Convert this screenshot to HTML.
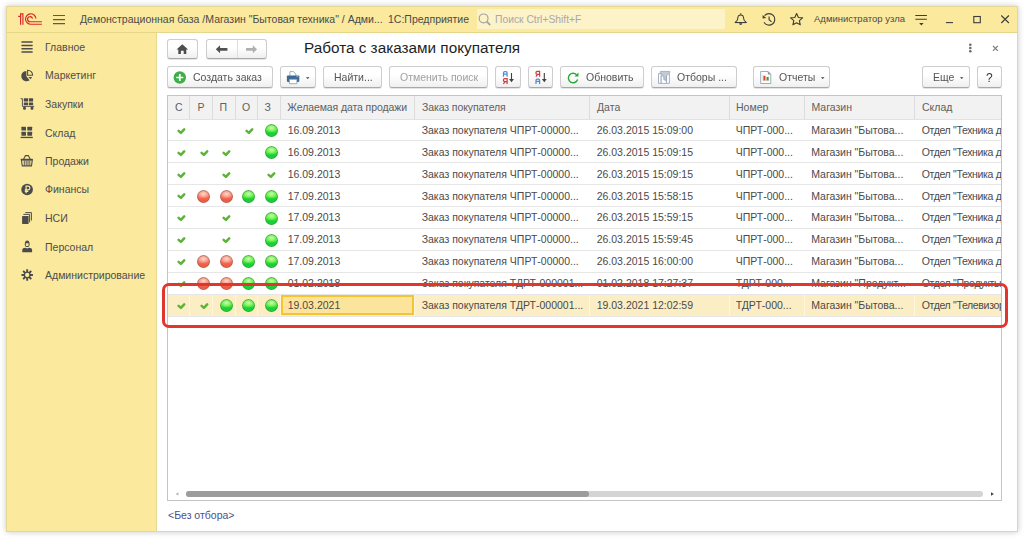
<!DOCTYPE html>
<html><head><meta charset="utf-8"><style>
*{box-sizing:border-box;margin:0;padding:0}
html,body{width:1024px;height:539px;overflow:hidden;background:#fff}
body{font-family:"Liberation Sans",sans-serif;font-size:10.5px;color:#4d4d4d;position:relative}
.abs{position:absolute}
.t{position:absolute;white-space:nowrap;line-height:13px}
svg{position:absolute;overflow:visible}
#win{position:absolute;left:6px;top:6px;width:1012px;height:526px;background:#fff;box-shadow:0 0 6px rgba(0,0,0,.22);border:1px solid #e4d797}
#hdr{position:absolute;left:7px;top:7px;width:1010px;height:26px;background:#fbe99d;border-bottom:1px solid #e6d68a}
#side{position:absolute;left:7px;top:33px;width:150px;height:498px;background:#fbe99d;border-right:1px solid #e8d98f}
.btn{position:absolute;height:22px;border:1px solid #cdcdcd;border-bottom-color:#a8a8a8;border-radius:3px;background:linear-gradient(#fff,#fff 40%,#efefef);box-shadow:0 1px 0 rgba(0,0,0,.10)}
.bt{position:absolute;white-space:nowrap;line-height:13px;color:#555;will-change:transform}
#tbl{position:absolute;left:167px;top:95px;width:835px;height:406px;border:1px solid #c4c4c4;background:#fff;overflow:hidden}
.hd{position:absolute;left:0;top:0;width:833px;height:24px;background:#f2f2f2;border-bottom:1px solid #e2e2e2}
.vd{position:absolute;top:0;width:1px;height:23px;background:#dcdcdc}
.hl{position:absolute;left:0;width:833px;height:1px;background:#e6e6e6}
.c{position:absolute;white-space:nowrap;overflow:hidden;line-height:13px;color:#4a4a4a}
.hc{position:absolute;white-space:nowrap;line-height:13px;color:#606060}
.dot{position:absolute;width:13px;height:13px;border-radius:50%}
.g{background:radial-gradient(ellipse 50% 36% at 50% 30%,#cffcb8 0,#80f564 55%,rgba(80,240,50,0) 100%),linear-gradient(#62f048,#44eb2e 45%,#14cd38 76%,#24d83a);box-shadow:inset 0 0 0 1px rgba(80,95,80,.5)}
.r{background:radial-gradient(ellipse 50% 36% at 50% 30%,#ffd9cf 0,#fba593 55%,rgba(245,110,85,0) 100%),linear-gradient(#f89380,#f3735c 50%,#ee5b42 80%,#f06a50);box-shadow:inset 0 0 0 1px rgba(110,90,90,.5)}
</style></head><body>
<div id="win"></div><div id="hdr"></div><div id="side"></div>
<div class="t" style="left:80px;top:13px;color:#4a4a4a">Демонстрационная база /Магазин "Бытовая техника" / Адми...</div>
<div class="t" style="left:388px;top:13px;color:#4a4a4a">1С:Предприятие</div>
<div class="abs" style="left:477px;top:9px;width:248px;height:20px;background:#fdf3c9"></div>
<div class="t" style="left:495px;top:13px;color:#a8a8a8;font-size:10.3px">Поиск Ctrl+Shift+F</div>
<div class="t" style="left:814px;top:12px;color:#4a4a4a;font-size:9.5px">Администратор узла</div>
<div class="t" style="left:45px;top:41px;">Главное</div>
<div class="t" style="left:45px;top:69px;">Маркетинг</div>
<div class="t" style="left:45px;top:98px;">Закупки</div>
<div class="t" style="left:45px;top:127px;">Склад</div>
<div class="t" style="left:45px;top:155px;">Продажи</div>
<div class="t" style="left:45px;top:183px;">Финансы</div>
<div class="t" style="left:45px;top:212px;">НСИ</div>
<div class="t" style="left:45px;top:241px;">Персонал</div>
<div class="t" style="left:45px;top:269px;">Администрирование</div>
<div class="t" style="left:304px;top:39px;font-size:15.3px;line-height:17px;color:#1e1e1e">Работа с заказами покупателя</div>
<div class="btn" style="left:167px;top:39px;width:31px;height:20px"></div>
<div class="btn" style="left:206px;top:39px;width:61px;height:20px"></div>
<div class="abs" style="left:237px;top:40px;width:1px;height:18px;background:#dedede"></div>
<div class="btn" style="left:167px;top:66px;width:106px;height:22px"></div>
<div class="bt" style="left:193px;top:71px;">Создать заказ</div>
<div class="btn" style="left:280px;top:66px;width:36px;height:22px"></div>
<div class="btn" style="left:323px;top:66px;width:59px;height:22px"></div>
<div class="bt" style="left:334px;top:71px;">Найти...</div>
<div class="btn" style="left:389px;top:66px;width:99px;height:22px"></div>
<div class="bt" style="left:400px;top:71px;color:#a0a0a0">Отменить поиск</div>
<div class="btn" style="left:495px;top:66px;width:26px;height:22px"></div>
<div class="btn" style="left:528px;top:66px;width:25px;height:22px"></div>
<div class="btn" style="left:560px;top:66px;width:84px;height:22px"></div>
<div class="bt" style="left:586px;top:71px;">Обновить</div>
<div class="btn" style="left:651px;top:66px;width:86px;height:22px"></div>
<div class="bt" style="left:677px;top:71px;">Отборы ...</div>
<div class="btn" style="left:753px;top:66px;width:77px;height:22px"></div>
<div class="bt" style="left:779px;top:71px;">Отчеты</div>
<div class="btn" style="left:922px;top:66px;width:48px;height:22px"></div>
<div class="bt" style="left:933px;top:71px;">Еще</div>
<div class="btn" style="left:977px;top:66px;width:25px;height:22px"></div>
<div class="bt" style="left:986px;top:72px;font-size:12px;color:#333">?</div>
<div id="tbl">
<div class="hd"></div>
<div class="vd" style="left:21px"></div>
<div class="vd" style="left:44px"></div>
<div class="vd" style="left:67px"></div>
<div class="vd" style="left:89px"></div>
<div class="vd" style="left:112px"></div>
<div class="vd" style="left:246px"></div>
<div class="vd" style="left:421px"></div>
<div class="vd" style="left:561px"></div>
<div class="vd" style="left:636px"></div>
<div class="vd" style="left:746px"></div>
<div class="hc" style="left:7.0px;top:5px;">С</div>
<div class="hc" style="left:29.5px;top:5px;">Р</div>
<div class="hc" style="left:51.5px;top:5px;">П</div>
<div class="hc" style="left:74.0px;top:5px;">О</div>
<div class="hc" style="left:96.5px;top:5px;">З</div>
<div class="hc" style="left:119.3px;top:5px;letter-spacing:-0.1px">Желаемая дата продажи</div>
<div class="hc" style="left:254.0px;top:5px;letter-spacing:-0.1px">Заказ покупателя</div>
<div class="hc" style="left:429.0px;top:5px;">Дата</div>
<div class="hc" style="left:568.0px;top:5px;">Номер</div>
<div class="hc" style="left:643.5px;top:5px;">Магазин</div>
<div class="hc" style="left:754.0px;top:5px;">Склад</div>
<svg style="left:9.0px;top:31.70px" width="9" height="7" viewBox="0 0 9 7"><path d="M1.6 2.9L3.9 4.9L7.2 1.4" fill="none" stroke="#5db338" stroke-width="2.5" stroke-linejoin="round" stroke-linecap="round"/></svg>
<svg style="left:76.8px;top:31.70px" width="9" height="7" viewBox="0 0 9 7"><path d="M1.6 2.9L3.9 4.9L7.2 1.4" fill="none" stroke="#5db338" stroke-width="2.5" stroke-linejoin="round" stroke-linecap="round"/></svg>
<div class="dot g" style="left:96.7px;top:28.00px"></div>
<div class="c" style="left:119.7px;top:28.00px;width:126px;">16.09.2013</div>
<div class="c" style="left:253.7px;top:28.00px;width:167px;">Заказ покупателя ЧПРТ-00000...</div>
<div class="c" style="left:428.7px;top:28.00px;width:132px;">26.03.2015 15:09:00</div>
<div class="c" style="left:567.7px;top:28.00px;width:67px;">ЧПРТ-000...</div>
<div class="c" style="left:643.2px;top:28.00px;width:102px;">Магазин "Бытова...</div>
<div class="c" style="left:753.7px;top:28.00px;width:100px;letter-spacing:-0.33px">Отдел "Техника для кухни"</div>
<div class="hl" style="top:44px"></div>
<svg style="left:9.0px;top:53.60px" width="9" height="7" viewBox="0 0 9 7"><path d="M1.6 2.9L3.9 4.9L7.2 1.4" fill="none" stroke="#5db338" stroke-width="2.5" stroke-linejoin="round" stroke-linecap="round"/></svg>
<svg style="left:31.6px;top:53.60px" width="9" height="7" viewBox="0 0 9 7"><path d="M1.6 2.9L3.9 4.9L7.2 1.4" fill="none" stroke="#5db338" stroke-width="2.5" stroke-linejoin="round" stroke-linecap="round"/></svg>
<svg style="left:54.2px;top:53.60px" width="9" height="7" viewBox="0 0 9 7"><path d="M1.6 2.9L3.9 4.9L7.2 1.4" fill="none" stroke="#5db338" stroke-width="2.5" stroke-linejoin="round" stroke-linecap="round"/></svg>
<div class="dot g" style="left:96.7px;top:49.90px"></div>
<div class="c" style="left:119.7px;top:49.87px;width:126px;">16.09.2013</div>
<div class="c" style="left:253.7px;top:49.87px;width:167px;">Заказ покупателя ЧПРТ-00000...</div>
<div class="c" style="left:428.7px;top:49.87px;width:132px;">26.03.2015 15:09:15</div>
<div class="c" style="left:567.7px;top:49.87px;width:67px;">ЧПРТ-000...</div>
<div class="c" style="left:643.2px;top:49.87px;width:102px;">Магазин "Бытова...</div>
<div class="c" style="left:753.7px;top:49.87px;width:100px;letter-spacing:-0.33px">Отдел "Техника для кухни"</div>
<div class="hl" style="top:66px"></div>
<svg style="left:9.0px;top:75.50px" width="9" height="7" viewBox="0 0 9 7"><path d="M1.6 2.9L3.9 4.9L7.2 1.4" fill="none" stroke="#5db338" stroke-width="2.5" stroke-linejoin="round" stroke-linecap="round"/></svg>
<svg style="left:54.2px;top:75.50px" width="9" height="7" viewBox="0 0 9 7"><path d="M1.6 2.9L3.9 4.9L7.2 1.4" fill="none" stroke="#5db338" stroke-width="2.5" stroke-linejoin="round" stroke-linecap="round"/></svg>
<svg style="left:99.4px;top:75.50px" width="9" height="7" viewBox="0 0 9 7"><path d="M1.6 2.9L3.9 4.9L7.2 1.4" fill="none" stroke="#5db338" stroke-width="2.5" stroke-linejoin="round" stroke-linecap="round"/></svg>
<div class="c" style="left:119.7px;top:71.74px;width:126px;">16.09.2013</div>
<div class="c" style="left:253.7px;top:71.74px;width:167px;">Заказ покупателя ЧПРТ-00000...</div>
<div class="c" style="left:428.7px;top:71.74px;width:132px;">26.03.2015 15:09:15</div>
<div class="c" style="left:567.7px;top:71.74px;width:67px;">ЧПРТ-000...</div>
<div class="c" style="left:643.2px;top:71.74px;width:102px;">Магазин "Бытова...</div>
<div class="c" style="left:753.7px;top:71.74px;width:100px;letter-spacing:-0.33px">Отдел "Техника для кухни"</div>
<div class="hl" style="top:88px"></div>
<svg style="left:9.0px;top:97.40px" width="9" height="7" viewBox="0 0 9 7"><path d="M1.6 2.9L3.9 4.9L7.2 1.4" fill="none" stroke="#5db338" stroke-width="2.5" stroke-linejoin="round" stroke-linecap="round"/></svg>
<div class="dot r" style="left:28.9px;top:93.70px"></div>
<div class="dot r" style="left:51.5px;top:93.70px"></div>
<div class="dot g" style="left:74.1px;top:93.70px"></div>
<div class="dot g" style="left:96.7px;top:93.70px"></div>
<div class="c" style="left:119.7px;top:93.61px;width:126px;">17.09.2013</div>
<div class="c" style="left:253.7px;top:93.61px;width:167px;">Заказ покупателя ЧПРТ-00000...</div>
<div class="c" style="left:428.7px;top:93.61px;width:132px;">26.03.2015 15:58:15</div>
<div class="c" style="left:567.7px;top:93.61px;width:67px;">ЧПРТ-000...</div>
<div class="c" style="left:643.2px;top:93.61px;width:102px;">Магазин "Бытова...</div>
<div class="c" style="left:753.7px;top:93.61px;width:100px;letter-spacing:-0.33px">Отдел "Техника для кухни"</div>
<div class="hl" style="top:110px"></div>
<svg style="left:9.0px;top:119.30px" width="9" height="7" viewBox="0 0 9 7"><path d="M1.6 2.9L3.9 4.9L7.2 1.4" fill="none" stroke="#5db338" stroke-width="2.5" stroke-linejoin="round" stroke-linecap="round"/></svg>
<svg style="left:54.2px;top:119.30px" width="9" height="7" viewBox="0 0 9 7"><path d="M1.6 2.9L3.9 4.9L7.2 1.4" fill="none" stroke="#5db338" stroke-width="2.5" stroke-linejoin="round" stroke-linecap="round"/></svg>
<div class="dot g" style="left:96.7px;top:115.60px"></div>
<div class="c" style="left:119.7px;top:115.48px;width:126px;">17.09.2013</div>
<div class="c" style="left:253.7px;top:115.48px;width:167px;">Заказ покупателя ЧПРТ-00000...</div>
<div class="c" style="left:428.7px;top:115.48px;width:132px;">26.03.2015 15:59:15</div>
<div class="c" style="left:567.7px;top:115.48px;width:67px;">ЧПРТ-000...</div>
<div class="c" style="left:643.2px;top:115.48px;width:102px;">Магазин "Бытова...</div>
<div class="c" style="left:753.7px;top:115.48px;width:100px;letter-spacing:-0.33px">Отдел "Техника для кухни"</div>
<div class="hl" style="top:132px"></div>
<svg style="left:9.0px;top:141.20px" width="9" height="7" viewBox="0 0 9 7"><path d="M1.6 2.9L3.9 4.9L7.2 1.4" fill="none" stroke="#5db338" stroke-width="2.5" stroke-linejoin="round" stroke-linecap="round"/></svg>
<svg style="left:54.2px;top:141.20px" width="9" height="7" viewBox="0 0 9 7"><path d="M1.6 2.9L3.9 4.9L7.2 1.4" fill="none" stroke="#5db338" stroke-width="2.5" stroke-linejoin="round" stroke-linecap="round"/></svg>
<div class="dot g" style="left:96.7px;top:137.50px"></div>
<div class="c" style="left:119.7px;top:137.35px;width:126px;">17.09.2013</div>
<div class="c" style="left:253.7px;top:137.35px;width:167px;">Заказ покупателя ЧПРТ-00000...</div>
<div class="c" style="left:428.7px;top:137.35px;width:132px;">26.03.2015 15:59:45</div>
<div class="c" style="left:567.7px;top:137.35px;width:67px;">ЧПРТ-000...</div>
<div class="c" style="left:643.2px;top:137.35px;width:102px;">Магазин "Бытова...</div>
<div class="c" style="left:753.7px;top:137.35px;width:100px;letter-spacing:-0.33px">Отдел "Техника для кухни"</div>
<div class="hl" style="top:154px"></div>
<svg style="left:9.0px;top:163.10px" width="9" height="7" viewBox="0 0 9 7"><path d="M1.6 2.9L3.9 4.9L7.2 1.4" fill="none" stroke="#5db338" stroke-width="2.5" stroke-linejoin="round" stroke-linecap="round"/></svg>
<div class="dot r" style="left:28.9px;top:159.40px"></div>
<div class="dot r" style="left:51.5px;top:159.40px"></div>
<div class="dot g" style="left:74.1px;top:159.40px"></div>
<div class="dot g" style="left:96.7px;top:159.40px"></div>
<div class="c" style="left:119.7px;top:159.22px;width:126px;">17.09.2013</div>
<div class="c" style="left:253.7px;top:159.22px;width:167px;">Заказ покупателя ЧПРТ-00000...</div>
<div class="c" style="left:428.7px;top:159.22px;width:132px;">26.03.2015 16:00:00</div>
<div class="c" style="left:567.7px;top:159.22px;width:67px;">ЧПРТ-000...</div>
<div class="c" style="left:643.2px;top:159.22px;width:102px;">Магазин "Бытова...</div>
<div class="c" style="left:753.7px;top:159.22px;width:100px;letter-spacing:-0.33px">Отдел "Техника для кухни"</div>
<div class="hl" style="top:176px"></div>
<svg style="left:9.0px;top:185.00px" width="9" height="7" viewBox="0 0 9 7"><path d="M1.6 2.9L3.9 4.9L7.2 1.4" fill="none" stroke="#5db338" stroke-width="2.5" stroke-linejoin="round" stroke-linecap="round"/></svg>
<div class="dot r" style="left:28.9px;top:181.30px"></div>
<div class="dot r" style="left:51.5px;top:181.30px"></div>
<div class="dot g" style="left:74.1px;top:181.30px"></div>
<div class="dot g" style="left:96.7px;top:181.30px"></div>
<div class="c" style="left:119.7px;top:181.09px;width:126px;">01.02.2018</div>
<div class="c" style="left:253.7px;top:181.09px;width:167px;">Заказ покупателя ТДРТ-000001...</div>
<div class="c" style="left:428.7px;top:181.09px;width:132px;">01.02.2018 17:27:37</div>
<div class="c" style="left:567.7px;top:181.09px;width:67px;">ТДРТ-000...</div>
<div class="c" style="left:643.2px;top:181.09px;width:102px;">Магазин "Продукт...</div>
<div class="c" style="left:753.7px;top:181.09px;width:100px;letter-spacing:-0.33px">Отдел "Продукты"</div>
<div class="hl" style="top:198px"></div>
<div class="abs" style="left:0;top:199px;width:833px;height:21px;background:#fbeec4"></div>
<div class="abs" style="left:21.0px;top:199px;width:1px;height:21px;background:#fff6dc"></div>
<div class="abs" style="left:44.0px;top:199px;width:1px;height:21px;background:#fff6dc"></div>
<div class="abs" style="left:67.0px;top:199px;width:1px;height:21px;background:#fff6dc"></div>
<div class="abs" style="left:89.0px;top:199px;width:1px;height:21px;background:#fff6dc"></div>
<div class="abs" style="left:112.0px;top:199px;width:1px;height:21px;background:#fff6dc"></div>
<div class="abs" style="left:246.0px;top:199px;width:1px;height:21px;background:#fff6dc"></div>
<div class="abs" style="left:421.0px;top:199px;width:1px;height:21px;background:#fff6dc"></div>
<div class="abs" style="left:561.0px;top:199px;width:1px;height:21px;background:#fff6dc"></div>
<div class="abs" style="left:636.0px;top:199px;width:1px;height:21px;background:#fff6dc"></div>
<div class="abs" style="left:746.0px;top:199px;width:1px;height:21px;background:#fff6dc"></div>
<div class="abs" style="left:113px;top:199px;width:133px;height:20px;background:#fde49c;border:2px solid #f6c431"></div>
<svg style="left:9.0px;top:206.90px" width="9" height="7" viewBox="0 0 9 7"><path d="M1.6 2.9L3.9 4.9L7.2 1.4" fill="none" stroke="#5db338" stroke-width="2.5" stroke-linejoin="round" stroke-linecap="round"/></svg>
<svg style="left:31.6px;top:206.90px" width="9" height="7" viewBox="0 0 9 7"><path d="M1.6 2.9L3.9 4.9L7.2 1.4" fill="none" stroke="#5db338" stroke-width="2.5" stroke-linejoin="round" stroke-linecap="round"/></svg>
<div class="dot g" style="left:51.5px;top:203.20px"></div>
<div class="dot g" style="left:74.1px;top:203.20px"></div>
<div class="dot g" style="left:96.7px;top:203.20px"></div>
<div class="c" style="left:119.7px;top:202.96px;width:126px;">19.03.2021</div>
<div class="c" style="left:253.7px;top:202.96px;width:167px;">Заказ покупателя ТДРТ-000001...</div>
<div class="c" style="left:428.7px;top:202.96px;width:132px;">19.03.2021 12:02:59</div>
<div class="c" style="left:567.7px;top:202.96px;width:67px;">ТДРТ-000...</div>
<div class="c" style="left:643.2px;top:202.96px;width:102px;">Магазин "Бытова...</div>
<div class="c" style="left:753.7px;top:202.96px;width:100px;letter-spacing:-0.33px">Отдел "Телевизоры"</div>
<div class="hl" style="top:220px"></div>
<div class="abs" style="left:18px;top:395px;width:797px;height:6px;border-radius:3px;background:#d4d4d4"></div>
<div class="abs" style="left:18px;top:395px;width:403px;height:6px;border-radius:3px;background:#9c9c9c"></div>
</div>
<div class="t" style="left:168px;top:509px;color:#4b4f8c">&lt;Без отбора&gt;</div>

<svg style="left:0;top:0" width="1024" height="539" viewBox="0 0 1024 539">
<!-- 1C logo -->
<g fill="none" stroke="#d9262b" stroke-width="1.15">
<path d="M18.2 16.4H20.6V13.9H22.9V24.7M20.6 16.4V24.7"/>
<path d="M35.9 18.5A5.2 5.2 0 1 0 30.8 24.2H41.9"/>
<path d="M32.5 18.7A2.5 2.5 0 1 0 30.1 21.7H41.9"/>
</g>
<!-- hamburger -->
<g stroke="#5e5a4c" stroke-width="1.2">
<path d="M53 15.5H65M53 19.6H65M53 23.7H65"/>
</g>
<!-- search -->
<g fill="none" stroke="#a3a3a3">
<circle cx="483.6" cy="18.4" r="4.4" stroke-width="1.2"/>
<path d="M486.8 21.6L490.2 25" stroke-width="1.8"/>
</g>
<!-- bell -->
<circle cx="740.7" cy="14" r=".8" fill="#3d3d3d"/>
<path d="M738.5 15.7Q740.7 14.2 742.9 15.7C743.6 16.6 743.6 19 744.3 20.5L746.2 22.4H735.2L737.1 20.5C737.8 19 737.8 16.6 738.5 15.7Z" fill="none" stroke="#3d3d3d" stroke-width="1.05" stroke-linejoin="round"/>
<path d="M735 22H746.4V23.1H735Z" fill="#3d3d3d"/>
<path d="M739.2 23.3A1.5 1.7 0 0 0 742.2 23.3Z" fill="#3d3d3d"/>
<!-- history -->
<g fill="none" stroke="#3d3d3d" stroke-width="1.15">
<path d="M764 22.3A5.8 5.8 0 1 0 764.6 15.6"/>
<path d="M769.1 16.4V19.7L771.5 21.9"/>
</g>
<path d="M762.6 14.9L766.2 17.9L762.6 18.4Z" fill="#3d3d3d"/>
<!-- star -->
<path d="M796.6 13.6L798.4 17.5L802.6 17.9L799.4 20.7L800.3 24.8L796.6 22.7L792.9 24.8L793.8 20.7L790.6 17.9L794.8 17.5Z" fill="none" stroke="#3d3d3d" stroke-width="1.1" stroke-linejoin="round"/>
<!-- menu -->
<g stroke="#3d3d3d" stroke-width="1.1"><path d="M915.3 15.5H926.9M915.3 19.2H926.9"/></g>
<path d="M919.2 23.1H923.6L921.4 25.5Z" fill="#3d3d3d"/>
<!-- min max close -->
<g fill="none" stroke="#3d3d3d" stroke-width="1.1">
<path d="M945.9 22.6H953"/>
<rect x="973.8" y="16.5" width="6.5" height="6.2"/>
<path d="M1001.3 15.5L1008.9 23M1008.9 15.5L1001.3 23"/>
</g>

<!-- sidebar icons -->
<g fill="#4b4b4b">
<!-- glavnoe -->
<g stroke="#4d4d4d" stroke-width="1.5" stroke-linecap="round"><path d="M22 42.1H32.1M22 45.4H32.1M22 48.7H32.1M22 52H32.1"/></g>
<!-- marketing -->
<path d="M26.4 70.9A5.2 5.2 0 1 0 29.6 80.2L26.4 76.2Z"/>
<path d="M27.6 70.2A5 5 0 0 1 32.6 75.3H27.6Z" fill="none" stroke="#4b4b4b" stroke-width="1.05"/>
<path d="M28.3 77H31.9A5.1 5.1 0 0 1 30.6 79.2Z"/>
<!-- zakupki -->
<path d="M20.6 98.7H22.4V106.4H34.2" fill="none" stroke="#505050" stroke-width=".95"/>
<rect x="23.8" y="98.2" width="4.3" height="3.2" rx=".5"/>
<rect x="28.9" y="98.2" width="4.2" height="3.2" rx=".5"/>
<rect x="23.8" y="102.4" width="4.3" height="2.8" rx=".5"/>
<rect x="28.9" y="102.4" width="4.2" height="2.8" rx=".5"/>
<rect x="23.1" y="106.8" width="2.8" height="2.9" rx=".9"/>
<rect x="30.6" y="106.8" width="2.8" height="2.9" rx=".9"/>
<!-- sklad -->
<rect x="21.4" y="126.8" width="4.6" height="3.8" rx=".4"/>
<rect x="27.3" y="126.8" width="4.8" height="3.8" rx=".4"/>
<rect x="21.4" y="131.8" width="4.6" height="3.9" rx=".4"/>
<rect x="27.3" y="131.8" width="4.8" height="3.9" rx=".4"/>
<rect x="20.6" y="136.8" width="12.2" height="1.3"/>
<!-- prodazhi -->
<path d="M23.6 159.2L25.4 155.6H28.4L30.2 159.2" fill="none" stroke="#4b4b4b" stroke-width="1.1"/>
<path d="M20.8 158.8H32.8V160.2H20.8Z"/>
<path d="M21.4 160L22.3 165.9H31.5L32.3 160Z" fill="none" stroke="#4b4b4b" stroke-width="1.1"/>
<path d="M24.3 160.5V165.5M26.2 160.5V165.5M28 160.5V165.5M29.8 160.5V165.5" stroke="#4b4b4b" stroke-width=".9"/>
<!-- finansy -->
<circle cx="27.1" cy="189.5" r="5.8"/>
<path d="M26.1 193.2V186.1H28A1.85 1.85 0 0 1 28 189.8H24.8M24.8 191.3H28.3" fill="none" stroke="#fbe99d" stroke-width="1.2"/>
<!-- nsi -->
<path d="M25.3 212.6H31.4V220.5" fill="none" stroke="#4b4b4b" stroke-width="1"/>
<path d="M23.4 214.4H29.6V222.4" fill="none" stroke="#4b4b4b" stroke-width="1"/>
<rect x="22.1" y="216" width="6.5" height="8" rx=".4"/>
<!-- personal -->
<path d="M24.8 244.2C24.8 241.3 25.8 240.4 27.2 240.4C28.6 240.4 29.6 241.3 29.6 244.2C29.6 246.2 28.6 247.1 27.2 247.1C25.8 247.1 24.8 246.2 24.8 244.2Z"/>
<path d="M25.8 243.6C26.6 243.2 27.8 243.2 28.6 243.6V245.4C28.1 246.2 26.3 246.2 25.8 245.4Z" fill="#fbe99d"/>
<path d="M22.3 252.3V249.8C22.3 248.6 23.6 247.9 25.4 247.8L27.2 248.6L29 247.8C30.8 247.9 32.1 248.6 32.1 249.8V252.3Z"/>
<!-- admin gear -->
<path fill-rule="evenodd" d="M26.19 271.70 L26.29 269.27 L28.11 269.27 L28.21 271.70 L28.82 271.95 L30.61 270.31 L31.89 271.59 L30.25 273.38 L30.50 273.99 L32.93 274.09 L32.93 275.91 L30.50 276.01 L30.25 276.62 L31.89 278.41 L30.61 279.69 L28.82 278.05 L28.21 278.30 L28.11 280.73 L26.29 280.73 L26.19 278.30 L25.58 278.05 L23.79 279.69 L22.51 278.41 L24.15 276.62 L23.90 276.01 L21.47 275.91 L21.47 274.09 L23.90 273.99 L24.15 273.38 L22.51 271.59 L23.79 270.31 L25.58 271.95Z M29.35 275.00 A2.15 2.15 0 1 0 25.05 275.00 A2.15 2.15 0 1 0 29.35 275.00Z"/>
</g>

<!-- home -->
<path d="M182.3 44.2L176.5 49.6H178.3V54H180.9V50.8H183.7V54H186.3V49.6H188.1Z" fill="#4d4d4d"/>
<!-- arrows -->
<path d="M215.8 49.3L220.1 45.3V47.9H227.4V50.7H220.1V53.3Z" fill="#505050"/>
<path d="M257.1 49.3L252.8 45.3V47.9H246V50.7H252.8V53.3Z" fill="#b0b0b0"/>
<!-- vertical dots & close -->
<g fill="#6a6a6a"><circle cx="970.3" cy="44.8" r="1.3"/><circle cx="970.3" cy="48" r="1.3"/><circle cx="970.3" cy="51.2" r="1.3"/></g>
<path d="M993 45.9L997.8 50.9M997.8 45.9L993 50.9" stroke="#7a7a7a" stroke-width="1.2"/>

<!-- create plus -->
<circle cx="179.8" cy="77.5" r="6.2" fill="#3fae49"/>
<path d="M179.8 74V81M176.3 77.5H183.3" stroke="#fff" stroke-width="1.7"/>
<!-- printer -->
<path d="M289.9 71.6H293.6L295.8 74.1V76.5H289.9Z" fill="#fff" stroke="#8a9aab" stroke-width=".8"/>
<path d="M286.9 76.3Q286.9 75.4 287.8 75.4H298.4Q299.3 75.4 299.3 76.3V80.8Q299.3 82 298.1 82H288.1Q286.9 82 286.9 80.8Z" fill="#3b6896"/>
<path d="M296.5 76.6H298.3" stroke="#dfe8f0" stroke-width=".6"/>
<path d="M289.4 79.3H296.9V83.7H289.4Z" fill="#fff" stroke="#8a9aab" stroke-width=".8"/>
<!-- dropdown tris -->
<g fill="#3d3d3d">
<path d="M305.9 77.2H309.5L307.7 79Z"/>
<path d="M820.9 77.2H824.5L822.7 79Z"/>
<path d="M959.9 77.2H963.5L961.7 79Z"/>
</g>
<!-- sort asc -->
<g fill="none" stroke-width="1.25">
<path d="M503.5 76.7V72.9Q503.5 71.7 504.7 71.7H506Q507.1 71.7 507.1 72.9V76.7M503.5 74.1H507.1" stroke="#4b8fd1"/>
<path d="M507.1 84V78.7H504.7Q503.5 78.7 503.5 79.9V80.6Q503.5 81.7 504.7 81.7H507.1M505.1 81.7L503.4 84" stroke="#d33a3c"/>
<path d="M539.6 76.7V71.4H537.2Q536 71.4 536 72.6V73.3Q536 74.4 537.2 74.4H539.6M537.6 74.4L535.9 76.7" stroke="#d33a3c"/>
<path d="M536 84V80.2Q536 79 537.2 79H538.5Q539.6 79 539.6 80.2V84M536 81.4H539.6" stroke="#4b8fd1"/>
</g>
<g stroke="#404040" stroke-width="1.1"><path d="M511.5 73.1V80.5M544.3 73.1V80.5"/></g>
<g fill="#404040"><path d="M509.1 79.1H513.9L511.5 82.3Z"/><path d="M541.9 79.1H546.7L544.3 82.3Z"/></g>
<!-- refresh -->
<path d="M577 75.3A4.75 4.75 0 1 0 577.6 79.6" fill="none" stroke="#2eaa3a" stroke-width="1.45"/>
<path d="M578.5 72.5V76.6H574.5Z" fill="#2eaa3a"/>
<!-- filter -->
<g stroke="#9aaaba" stroke-width=".9" fill="#fff">
<path d="M658.5 73.6H661.2V83.4H658.5Z"/>
<path d="M666.4 73.6H669.4V83.4H666.4Z"/>
<path d="M661.2 76H666.4V83.4H661.2Z"/>
</g>
<path d="M660.3 71.4H669.8V72.8L666.2 76.3V80.4L663.8 79.8V76.3L660.3 72.8Z" fill="#c3ccd5" stroke="#8d9cab" stroke-width=".7"/>
<!-- report -->
<path d="M760.7 71.5H768.2L770.8 74.2V83.5H760.7Z" fill="#fff" stroke="#9aa6b4" stroke-width=".95"/>
<path d="M767.8 71.2V74.6H771.1Z" fill="#8d9aaa"/>
<path d="M762.9 74.4V80.7H769.3" fill="none" stroke="#c8c8c8" stroke-width=".6"/>
<rect x="763.4" y="75.8" width="2.1" height="4.6" fill="#e8402c"/>
<rect x="766.5" y="76.9" width="2.2" height="3.5" fill="#3c9e2c"/>
<!-- scroll arrows -->
<path d="M178.4 492.3V495.5L175.7 493.9Z" fill="#b0b0b0"/>
<path d="M991 492.3V495.7L993.9 494Z" fill="#404040"/>
</svg>

<div class="abs" style="left:162px;top:283px;width:846px;height:45px;border:3px solid #e2362d;border-radius:7px"></div>
</body></html>
